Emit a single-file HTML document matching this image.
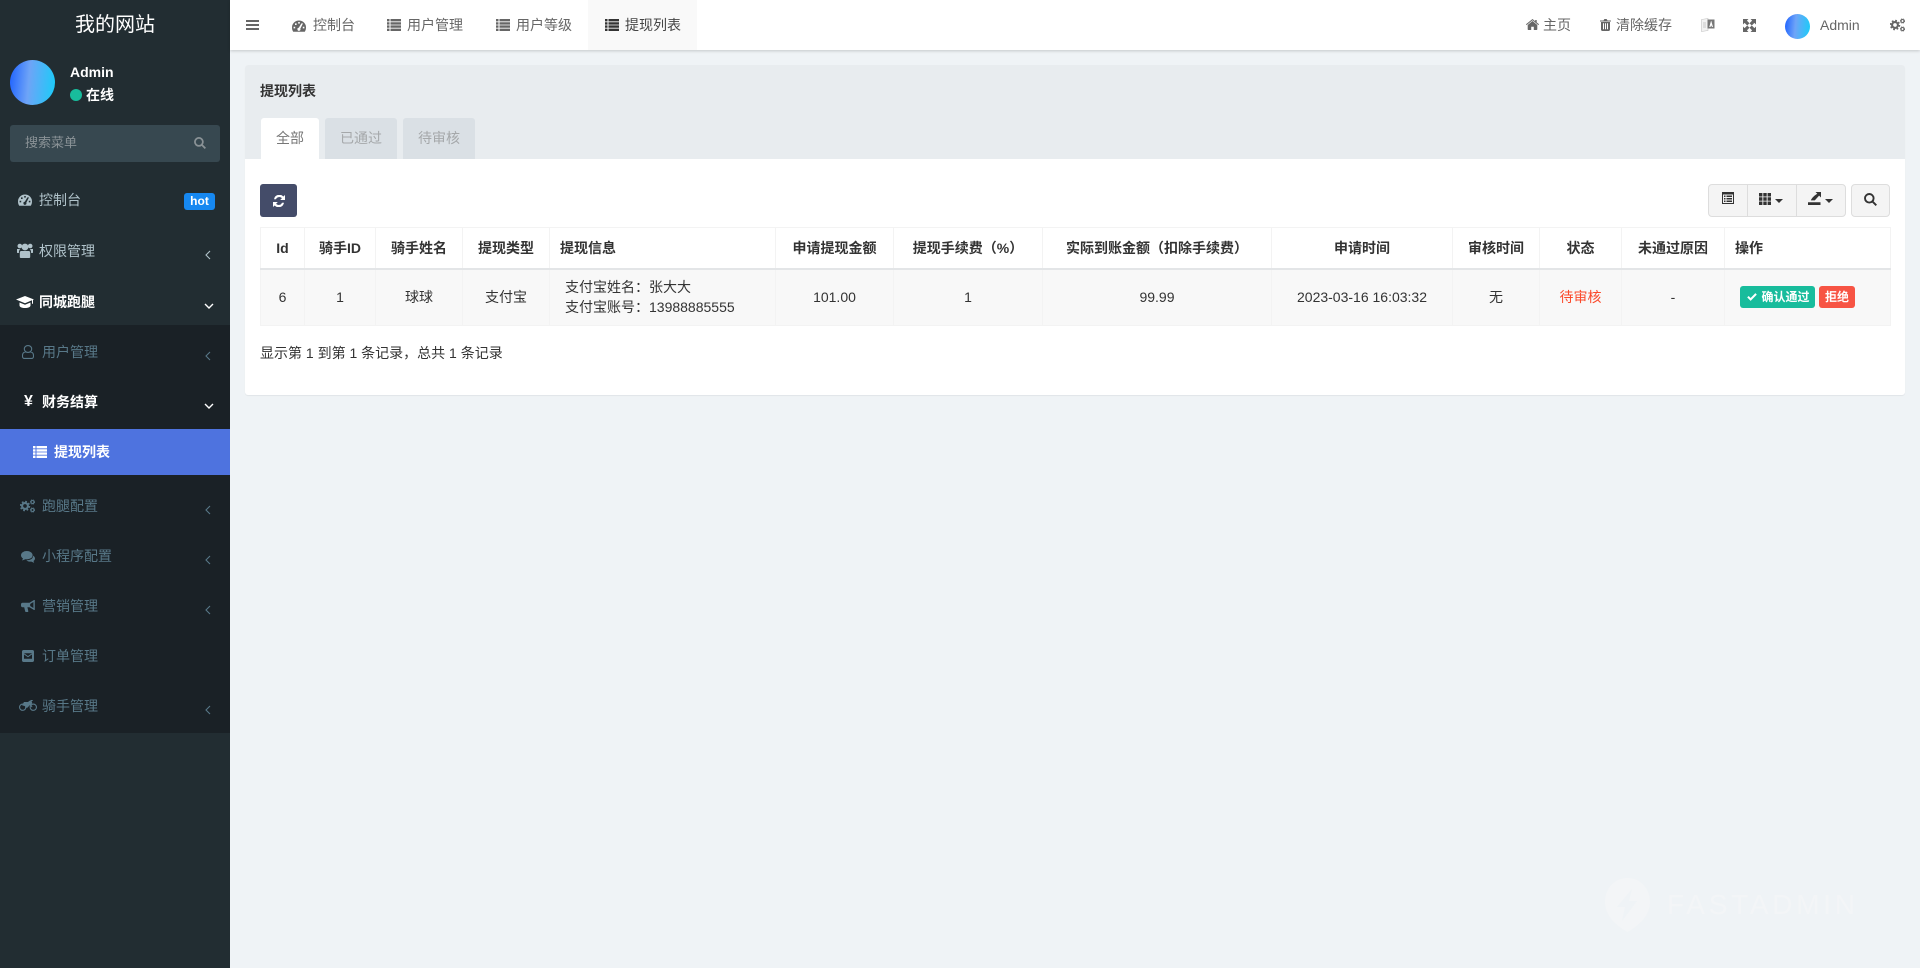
<!DOCTYPE html>
<html lang="zh-CN">
<head>
<meta charset="utf-8">
<title>提现列表</title>
<style>
*{box-sizing:border-box}
html,body{margin:0;padding:0;width:1920px;height:968px;overflow:hidden;background:#eff3f6;font:14px/20px "Liberation Sans","Noto Sans CJK SC",sans-serif;color:#333}
.a{position:absolute;white-space:nowrap}
svg{display:block;fill:currentColor;overflow:visible}
svg.a{display:block}
#side{position:absolute;left:0;top:0;width:230px;height:968px;background:#222d32}
#sub{position:absolute;left:0;top:325px;width:230px;height:408px;background:#1a2126}
#act{position:absolute;left:0;top:429px;width:230px;height:46px;background:#4e73df}
.t1{color:#b0c2ca}.t2{color:#587888}.w{color:#fff;font-weight:bold}
#top{position:absolute;left:230px;top:0;width:1690px;height:50px;background:#fff;box-shadow:0 1px 3px rgba(0,0,0,.18)}
.n{color:#666}
#panel{position:absolute;left:245px;top:65px;width:1660px;height:330px;background:#fff;border-radius:3px;box-shadow:0 1px 1px rgba(0,0,0,.06)}
#ph{position:absolute;left:0;top:0;width:1660px;height:94px;background:#e8ecef;border-radius:3px 3px 0 0}
.tab{position:absolute;top:118px;height:41px;line-height:40px;text-align:center;border-radius:3px 3px 0 0;background:#dae0e5;color:#a5a8aa}
.btn{position:absolute;top:184px;height:33px;background:#f4f4f4;border:1px solid #ddd;color:#333}
table{position:absolute;left:260px;top:227px;width:1630px;border-collapse:collapse;table-layout:fixed}
th,td{border:1px solid #f3f3f3;text-align:center;padding:0;font-size:14px;line-height:20px}
th{height:41px;font-weight:bold;color:#333;border-bottom:2px solid #e3e5e7}
td{height:57px;background:#f8f8f8;color:#333}
.l{text-align:left}
.bd{position:absolute;top:286px;height:22px;line-height:22px;border-radius:3px;color:#fff;font-size:12px;font-weight:bold;text-align:center}
</style>
</head>
<body>
<svg width="0" height="0" style="position:absolute">
<defs>
<symbol id="list" viewBox="0 0 14 12"><path d="M0 0h2.500v2.400H0zM3.500 0H14v2.400H3.500zM0 3.200h2.500v2.400H0zM3.500 3.200H14v2.400H3.500zM0 6.400h2.500v2.400H0zM3.500 6.400H14v2.400H3.500zM0 9.600h2.500V12H0zM3.500 9.600H14V12H3.500z"/></symbol>
<symbol id="gauge" viewBox="0 0 14 12"><path fill-rule="evenodd" d="M7 .5A7 7 0 0 0 0 7.500c0 1.600.4 3 1.200 4.200h11.600c.8-1.200 1.200-2.600 1.200-4.200a7 7 0 0 0-7-7zM6.200 2h1.600v1.600H6.200zM3 3.400h1.600V5H3zM9.400 3.400H11L8.300 8.700a1.500 1.500 0 1 1-1.500-.9zM1.600 6.800h1.600v1.600H1.600zM10.800 6.800h1.600v1.600h-1.600z"/></symbol>
<symbol id="users" viewBox="0 0 16 15" preserveAspectRatio="none"><circle cx="8" cy="4" r="3.400"/><circle cx="2.800" cy="3" r="2.300"/><circle cx="13.200" cy="3" r="2.300"/><path d="M4.200 8h7.600c.9 0 1.400.8 1.400 1.800V14c0 .6-.4 1-1 1H3.800c-.6 0-1-.4-1-1V9.800C2.800 8.800 3.300 8 4.200 8zM0 6h3.200c-.8.6-1.300 2-1.300 4H.8C.3 10 0 9.700 0 9.200zM12.800 6H16v3.200c0 .5-.3.800-.8.800h-1.100c0-2-.5-3.400-1.300-4z"/></symbol>
<symbol id="cap" viewBox="0 0 18 12"><path d="M9 0 0 3.500l9 3.700 7-2.900v3.500h1V3.900l1-.4zM3.500 6.500v3C3.500 11 6 12 9 12s5.500-1 5.500-2.500v-3L9 8.800z"/></symbol>
<symbol id="user" viewBox="0 0 12 14"><path fill="none" stroke="currentColor" stroke-width="1.100" d="M6 .6c2.200 0 3.700 1.500 3.700 3.400C9.700 6 8 7.400 6 7.400S2.300 6 2.300 4C2.300 2.100 3.800.6 6 .6zM3.400 7c-1.800.2-2.900 1.300-2.900 3.600v.9c0 1 .8 1.900 1.800 1.900h7.400c1 0 1.800-.9 1.800-1.900v-.9c0-2.300-1.100-3.400-2.900-3.600"/></symbol>
<symbol id="gears" viewBox="0 0 15 14"><g fill="none" stroke="currentColor"><circle cx="5" cy="7" r="2.900" stroke-width="2.100"/><circle cx="5" cy="7" r="4.400" stroke-width="1.700" stroke-dasharray="1.730 1.730"/><circle cx="12.500" cy="3" r="1.500" stroke-width="1.100"/><circle cx="12.500" cy="3" r="2.200" stroke-width=".7" stroke-dasharray="1 .73"/><circle cx="12.500" cy="11" r="1.500" stroke-width="1.100"/><circle cx="12.500" cy="11" r="2.200" stroke-width=".7" stroke-dasharray="1 .73"/></g></symbol>
<symbol id="chat" viewBox="0 0 14 12"><ellipse cx="5.800" cy="4.200" rx="5.800" ry="4.200"/><path d="M2 7l-.8 2.500L5 8zM12 4.600c1.300.7 2 1.800 2 2.900 0 1-.6 1.900-1.500 2.500l.7 1.900-2.800-1.300c-2 .3-3.900-.3-5-1.400 3.700.2 7-1.600 6.600-4.600z"/></symbol>
<symbol id="horn" viewBox="0 0 14 12"><path fill-rule="evenodd" d="M13 0h.8v10h-.8L8.500 7.200H6.400l.9 3.900c.1.500-.2.900-.7.900H5c-.4 0-.7-.2-.8-.6L3.200 7.200H1.500C.7 7.200 0 6.500 0 5.700V4.300c0-.8.7-1.500 1.500-1.500h7zM12.400 2 9.200 4v2l3.200 2z"/></symbol>
<symbol id="mail" viewBox="0 0 12 12"><path fill-rule="evenodd" d="M1.500 0h9C11.300 0 12 .7 12 1.500v9c0 .8-.7 1.500-1.500 1.500h-9C.7 12 0 11.300 0 10.500v-9C0 .7.7 0 1.500 0zM2 3.200v5.600h8V3.200z"/><path d="M2 3.800 6 6.600l4-2.800" fill="none" stroke="currentColor" stroke-width="1"/></symbol>
<symbol id="moto" viewBox="0 0 18 11"><path fill-rule="evenodd" d="M3.700 3.500a3.700 3.700 0 1 1 0 7.400 3.700 3.700 0 0 1 0-7.400zm0 1.100a2.600 2.600 0 1 0 0 5.200 2.600 2.600 0 0 0 0-5.200zM14.300 3.500a3.700 3.700 0 1 1 0 7.400 3.700 3.700 0 0 1 0-7.400zm0 1.100a2.600 2.600 0 1 0 0 5.200 2.600 2.600 0 0 0 0-5.200z"/><path d="M5 2h4l1.500-1.200h2l.8 2.400-1.200 1.200L13.500 7l-.8.4L11 5l-2.700 2.700H6l.5-1.300L3 5.200zM11.500 0h2.200v1h-2.200z"/></symbol>
<symbol id="home" viewBox="0 0 13 11"><path d="M6.500 2 1.700 6v4.300c0 .4.300.7.600.7h2.900V7.700h2.600V11h2.900c.3 0 .6-.3.600-.7V6z"/><path d="M6.500 0 0 5.300l.6.800 5.900-4.900 5.900 4.900.6-.8-2.300-1.900V1h-1.500v1.200z"/></symbol>
<symbol id="trash" viewBox="0 0 11 12"><path fill-rule="evenodd" d="M3.500 1.500 4.200.3C4.300.1 4.500 0 4.700 0h1.600c.2 0 .4.100.5.3l.7 1.200H11v1H0v-1zM1 3h9v7.500c0 .8-.6 1.500-1.300 1.500H2.300C1.600 12 1 11.300 1 10.500zm2 1.300v6h1v-6zm2 0v6h1v-6zm2 0v6h1v-6z"/></symbol>
<symbol id="expand" viewBox="0 0 13 13"><path d="M0 0h5.500L3.900 1.600l2.600 2.600-2.300 2.300-2.600-2.600L0 5.500zM13 0v5.500L11.400 3.900 8.800 6.500 6.500 4.200l2.600-2.600L7.500 0zM0 13V7.500l1.600 1.600 2.600-2.600 2.300 2.300-2.600 2.600L5.500 13zM13 13H7.500l1.600-1.600-2.600-2.600 2.300-2.300 2.600 2.600L13 7.500z"/></symbol>
<symbol id="search" viewBox="0 0 13 13"><path fill="none" stroke="currentColor" stroke-width="1.900" d="M5.300 1a4.300 4.300 0 1 1 0 8.600 4.300 4.300 0 0 1 0-8.600zM8.400 8.400 12.300 12.300"/></symbol>
<symbol id="refresh" viewBox="0 0 12 12"><path d="M10.300 1.500 12 0v5H7.200l1.700-1.700A3.500 3.500 0 0 0 3 4.200H1a5.400 5.400 0 0 1 9.300-2.700zM1.700 10.500 0 12V7h4.800L3.100 8.700A3.500 3.500 0 0 0 9 7.800h2a5.400 5.400 0 0 1-9.300 2.700z"/></symbol>
<symbol id="tablei" viewBox="0 0 12 12"><path fill-rule="evenodd" d="M0 0h12v12H0zM1 2.500V11h10V2.500zM2 3.500h1.500V5H2zM4.500 3.500H10V5H4.500zM2 6h1.500v1.500H2zM4.500 6H10v1.500H4.500zM2 8.500h1.500V10H2zM4.500 8.500H10V10H4.500z"/></symbol>
<symbol id="th" viewBox="0 0 12 12"><path d="M0 0h3.400v3.500H0zM4.300 0h3.400v3.500H4.300zM8.600 0H12v3.500H8.600zM0 4.250h3.400v3.500H0zM4.300 4.250h3.400v3.500H4.300zM8.600 4.250H12v3.500H8.600zM0 8.500h3.400V12H0zM4.300 8.500h3.400V12H4.300zM8.600 8.500H12V12H8.600z"/></symbol>
<symbol id="exp" viewBox="0 0 13 13"><path d="M0 10.200h12.500V13H0zM7.500 0H13v5.500l-1.900-1.900-4.300 4.800H2.800C4 5.800 6 3.800 9.300 1.800z"/></symbol>
<symbol id="chk" viewBox="0 0 12 10"><path d="M4.300 9.800 0 5.500l1.800-1.800 2.500 2.500L10.200.2 12 2z"/></symbol>
</defs>
</svg>

<div id="side"></div>
<div id="sub"></div>
<div id="act"></div>

<div class="a" style="left:0;top:10px;width:230px;text-align:center;font-size:20px;line-height:30px;color:#fff">我的网站</div>
<div class="a" style="left:10px;top:60px;width:45px;height:45px;border-radius:50%;background:linear-gradient(95deg,#1e62ff 0%,#6ea4f7 42%,#18cdf9 100%)"></div>
<div class="a w" style="left:70px;top:62px">Admin</div>
<div class="a" style="left:70px;top:89px;width:12px;height:12px;border-radius:50%;background:#18bc9c"></div>
<div class="a w" style="left:86px;top:85px">在线</div>
<div class="a" style="left:10px;top:125px;width:210px;height:37px;background:#374850;border-radius:3px"></div>
<div class="a" style="left:25px;top:133px;font-size:13px;color:#8a9296">搜索菜单</div>
<svg class="a" style="left:194px;top:137px;color:#8a9296" width="12" height="12"><use href="#search"/></svg>

<svg class="a t1" style="left:18px;top:194px" width="14" height="12"><use href="#gauge"/></svg>
<div class="a t1" style="left:39px;top:190px">控制台</div>
<div class="a" style="left:184px;top:193px;width:31px;height:17px;line-height:17px;background:#1688f1;border-radius:3px;color:#fff;font-size:12px;font-weight:bold;text-align:center">hot</div>

<svg class="a t1" style="left:17px;top:243px" width="16" height="15"><use href="#users"/></svg>
<div class="a t1" style="left:39px;top:241px">权限管理</div>
<svg class="a t1" style="left:205px;top:250px" width="6" height="10"><path d="M5 1 1 5l4 4" fill="none" stroke="currentColor" stroke-width="1.100"/></svg>

<svg class="a" style="left:16px;top:296px;color:#fff" width="18" height="12"><use href="#cap"/></svg>
<div class="a w" style="left:39px;top:292px">同城跑腿</div>
<svg class="a" style="left:204px;top:303px;color:#fff" width="10" height="6"><path d="M1 1l4 4 4-4" fill="none" stroke="currentColor" stroke-width="1.400"/></svg>

<svg class="a t2" style="left:22px;top:345px" width="12" height="14"><use href="#user"/></svg>
<div class="a t2" style="left:42px;top:342px">用户管理</div>
<svg class="a t2" style="left:205px;top:351px" width="6" height="10"><path d="M5 1 1 5l4 4" fill="none" stroke="currentColor" stroke-width="1.100"/></svg>

<div class="a w" style="left:24px;top:392px;font-size:16px">¥</div>
<div class="a w" style="left:42px;top:392px">财务结算</div>
<svg class="a" style="left:204px;top:403px;color:#fff" width="10" height="6"><path d="M1 1l4 4 4-4" fill="none" stroke="currentColor" stroke-width="1.400"/></svg>

<svg class="a" style="left:33px;top:446px;color:#fff" width="14" height="12"><use href="#list"/></svg>
<div class="a" style="left:54px;top:442px;color:#fff;font-weight:bold">提现列表</div>

<svg class="a t2" style="left:20px;top:499px" width="15" height="14"><use href="#gears"/></svg>
<div class="a t2" style="left:42px;top:496px">跑腿配置</div>
<svg class="a t2" style="left:205px;top:505px" width="6" height="10"><path d="M5 1 1 5l4 4" fill="none" stroke="currentColor" stroke-width="1.100"/></svg>

<svg class="a t2" style="left:21px;top:551px" width="14" height="12"><use href="#chat"/></svg>
<div class="a t2" style="left:42px;top:546px">小程序配置</div>
<svg class="a t2" style="left:205px;top:555px" width="6" height="10"><path d="M5 1 1 5l4 4" fill="none" stroke="currentColor" stroke-width="1.100"/></svg>

<svg class="a t2" style="left:21px;top:600px" width="14" height="12"><use href="#horn"/></svg>
<div class="a t2" style="left:42px;top:596px">营销管理</div>
<svg class="a t2" style="left:205px;top:605px" width="6" height="10"><path d="M5 1 1 5l4 4" fill="none" stroke="currentColor" stroke-width="1.100"/></svg>

<svg class="a t2" style="left:22px;top:650px" width="12" height="12"><use href="#mail"/></svg>
<div class="a t2" style="left:42px;top:646px">订单管理</div>

<svg class="a t2" style="left:19px;top:700px" width="18" height="11"><use href="#moto"/></svg>
<div class="a t2" style="left:42px;top:696px">骑手管理</div>
<svg class="a t2" style="left:205px;top:705px" width="6" height="10"><path d="M5 1 1 5l4 4" fill="none" stroke="currentColor" stroke-width="1.100"/></svg>

<div id="top"></div>
<div class="a" style="left:588px;top:0;width:109px;height:50px;background:#f9f9f9"></div>
<svg class="a n" style="left:246px;top:20px" width="13" height="10"><path d="M0 0h13v2H0zM0 4h13v2H0zM0 8h13v2H0z"/></svg>
<svg class="a n" style="left:292px;top:20px" width="14" height="12"><use href="#gauge"/></svg>
<div class="a n" style="left:313px;top:15px">控制台</div>
<svg class="a n" style="left:387px;top:19px" width="14" height="12"><use href="#list"/></svg>
<div class="a n" style="left:407px;top:15px">用户管理</div>
<svg class="a n" style="left:496px;top:19px" width="14" height="12"><use href="#list"/></svg>
<div class="a n" style="left:516px;top:15px">用户等级</div>
<svg class="a" style="left:605px;top:19px;color:#333" width="14" height="12"><use href="#list"/></svg>
<div class="a" style="left:625px;top:15px;color:#444">提现列表</div>

<svg class="a n" style="left:1526px;top:19px" width="13" height="11"><use href="#home"/></svg>
<div class="a n" style="left:1543px;top:15px">主页</div>
<svg class="a n" style="left:1600px;top:19px" width="11" height="12"><use href="#trash"/></svg>
<div class="a n" style="left:1616px;top:15px">清除缓存</div>
<svg class="a" style="left:1701px;top:18px" width="14" height="14" viewBox="0 0 14 14"><path d="M.5 1.500 7 .5v12l-6.500 1z" fill="#f2f2f2" stroke="#c4c4c4" stroke-width=".6"/><path d="M2 5h3M2 7h3M2 9h3" stroke="#bbb" stroke-width=".8"/><path d="M6.500 1.500h7v9h-7z" fill="#777"/><path d="M10 3 8.300 9h1.200l.3-1.200h.8l.3 1.200H12l-1.700-6z" fill="#fff"/></svg>
<svg class="a n" style="left:1743px;top:19px" width="13" height="13"><use href="#expand"/></svg>
<div class="a" style="left:1785px;top:14px;width:25px;height:25px;border-radius:50%;background:linear-gradient(95deg,#1e62ff 0%,#6ea4f7 42%,#18cdf9 100%)"></div>
<div class="a n" style="left:1820px;top:15px">Admin</div>
<svg class="a n" style="left:1890px;top:18px" width="15" height="14"><use href="#gears"/></svg>

<div id="panel"><div id="ph"></div></div>
<div class="a" style="left:260px;top:81px;font-weight:bold;color:#333">提现列表</div>
<div class="tab" style="left:261px;width:58px;background:#fff;color:#777">全部</div>
<div class="tab" style="left:325px;width:72px">已通过</div>
<div class="tab" style="left:403px;width:72px">待审核</div>

<div class="a" style="left:260px;top:184px;width:37px;height:33px;background:#444c69;border-radius:3px"></div>
<svg class="a" style="left:273px;top:195px;color:#fff" width="12" height="12"><use href="#refresh"/></svg>

<div class="btn" style="left:1708px;width:40px;border-radius:4px 0 0 4px"></div>
<div class="btn" style="left:1747px;width:50px"></div>
<div class="btn" style="left:1796px;width:50px;border-radius:0 4px 4px 0"></div>
<div class="btn" style="left:1851px;width:39px;border-radius:4px"></div>
<svg class="a" style="left:1722px;top:192px;color:#333" width="12" height="12"><use href="#tablei"/></svg>
<svg class="a" style="left:1759px;top:193px;color:#333" width="12" height="12"><use href="#th"/></svg>
<svg class="a" style="left:1775px;top:199px;color:#333" width="8" height="4"><path d="M0 0h8L4 4z"/></svg>
<svg class="a" style="left:1808px;top:192px;color:#333" width="13" height="13"><use href="#exp"/></svg>
<svg class="a" style="left:1825px;top:199px;color:#333" width="8" height="4"><path d="M0 0h8L4 4z"/></svg>
<svg class="a" style="left:1864px;top:193px;color:#333" width="13" height="13"><use href="#search"/></svg>

<table>
<colgroup>
<col style="width:44px"><col style="width:71px"><col style="width:87px"><col style="width:87px"><col style="width:226px"><col style="width:118px"><col style="width:149px"><col style="width:229px"><col style="width:181px"><col style="width:87px"><col style="width:82px"><col style="width:103px"><col style="width:166px">
</colgroup>
<tr>
<th>Id</th><th>骑手ID</th><th>骑手姓名</th><th>提现类型</th><th class="l" style="padding-left:10px">提现信息</th><th>申请提现金额</th><th>提现手续费（%）</th><th>实际到账金额（扣除手续费）</th><th>申请时间</th><th>审核时间</th><th>状态</th><th>未通过原因</th><th class="l" style="padding-left:10px">操作</th>
</tr>
<tr>
<td>6</td><td>1</td><td>球球</td><td>支付宝</td><td class="l" style="padding-left:15px">支付宝姓名：张大大<br>支付宝账号：13988885555</td><td>101.00</td><td>1</td><td>99.99</td><td>2023-03-16 16:03:32</td><td>无</td><td style="color:#fb4a2b">待审核</td><td>-</td><td></td>
</tr>
</table>

<div class="bd" style="left:1740px;width:75px;background:#18bc9c;padding-left:16px">确认通过</div>
<svg class="a" style="left:1747px;top:293px;color:#fff" width="10" height="8"><use href="#chk"/></svg>
<div class="bd" style="left:1819px;width:36px;background:#f75444">拒绝</div>

<div class="a" style="left:260px;top:343px;color:#333">显示第 1 到第 1 条记录，总共 1 条记录</div>

<svg class="a" style="left:1605px;top:878px" width="250" height="54" viewBox="0 0 250 54">
<path fill-rule="evenodd" d="M22.500 0C35 0 45 10 45 24c0 13-10 23-22.500 30C10 47 0 37 0 24 0 10 10 0 22.500 0zM27 11 12 29h8l-3 14 15-20h-8z" fill="#f3f5f7"/>
<text x="62" y="36" font-size="28" textLength="188" fill="#f3f5f7" font-family="Liberation Sans, sans-serif">FASTADMIN</text>
</svg>
</body>
</html>
